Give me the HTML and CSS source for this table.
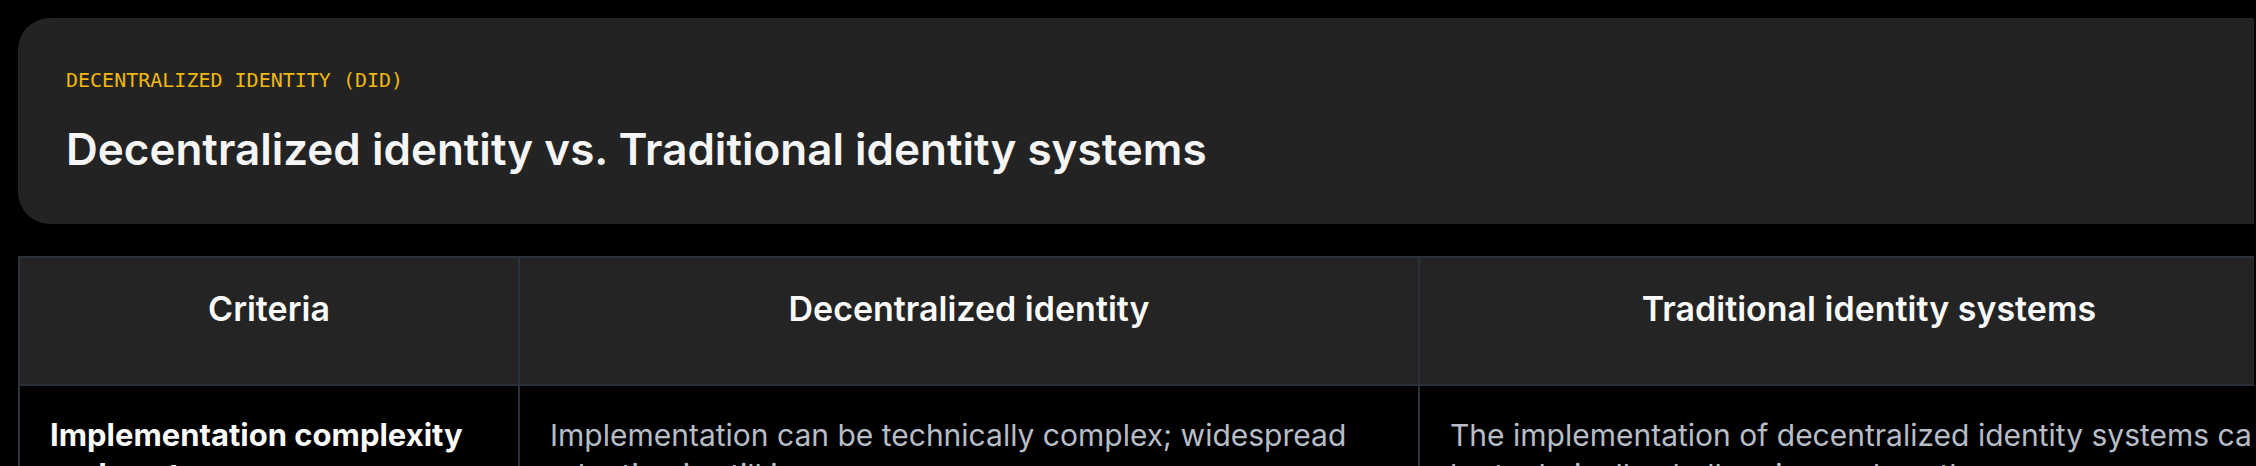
FILE: index.html
```html
<!DOCTYPE html>
<html lang="en">
<head>
<meta charset="utf-8">
<title>Decentralized identity vs. Traditional identity systems</title>
<link rel="stylesheet" href="styles.css">
</head>
<body>
<div class="viewport">
  <div class="page">
    <section class="card">
      <div class="eyebrow">DECENTRALIZED IDENTITY (DID)</div>
      <h1 class="title">Decentralized identity vs. Traditional identity systems</h1>
    </section>
    <table class="compare">
      <colgroup>
        <col class="c1">
        <col class="c2">
        <col class="c3">
      </colgroup>
      <thead>
        <tr>
          <th>Criteria</th>
          <th>Decentralized identity</th>
          <th>Traditional identity systems</th>
        </tr>
      </thead>
      <tbody>
        <tr>
          <td class="label">Implementation complexity and cost</td>
          <td>Implementation can be technically complex; widespread adoption is still in progress.</td>
          <td>The implementation of decentralized identity systems can be technically challenging and costly.</td>
        </tr>
      </tbody>
    </table>
  </div>
</div>
</body>
</html>
```
FILE: styles.css
```css
html, body {
  margin: 0;
  padding: 0;
  background: #000;
}

body {
  width: 2256px;
  height: 466px;
  overflow: hidden;
  font-family: "Inter", "Noto Sans", sans-serif;
}

.viewport {
  box-sizing: border-box;
  width: 2254px;
  height: 466px;
  overflow: hidden;
  padding: 18px 0 0 18px;
}

.page {
  width: 2300px;
  display: flex;
  flex-direction: column;
  gap: 32px;
}

.card {
  background: #232323;
  border-radius: 32px;
  padding: 50px 48px 48px 48px;
}

.eyebrow {
  font-family: "DejaVu Sans Mono", "Liberation Mono", monospace;
  font-size: 20px;
  line-height: 24px;
  color: #f0b90b;
}

.title {
  margin: 30px 0 0 0;
  font-family: "Inter", sans-serif;
  font-weight: 600;
  font-size: 44px;
  line-height: 54px;
  color: #f5f5f5;
}

.compare {
  width: 2300px;
  table-layout: fixed;
  border-collapse: collapse;
  border: 2px solid #2b3139;
}

.compare .c1 { width: 500px; }
.compare .c2 { width: 900px; }
.compare .c3 { width: 900px; }

.compare th {
  background: #242424;
  border: 2px solid #2b3139;
  padding: 30px 30px 55px 30px;
  font-weight: 600;
  font-size: 34px;
  line-height: 41px;
  color: #fafafa;
  text-align: center;
  vertical-align: top;
}

.compare td {
  border: 2px solid #2b3139;
  padding: 29px 30px;
  font-size: 30px;
  line-height: 40px;
  color: #b7bdc6;
  text-align: left;
  vertical-align: top;
}

.compare td.label {
  font-weight: 700;
  font-size: 31px;
  color: #fafafa;
}
```
